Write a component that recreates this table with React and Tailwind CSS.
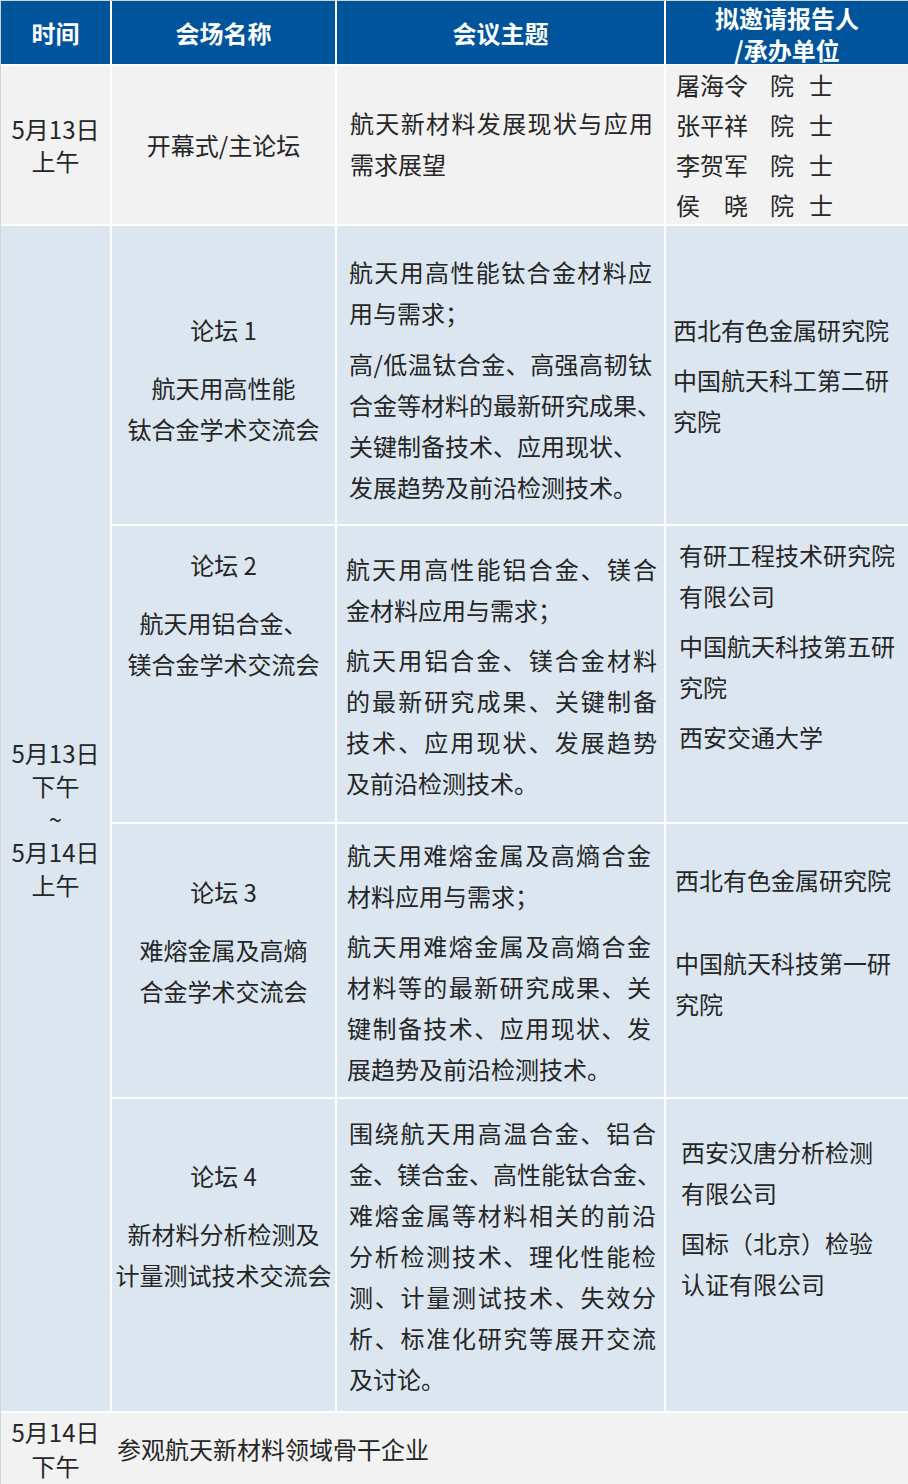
const cn = "font-['Noto_Sans_CJK_SC','Noto_Sans',sans-serif]";

function Lines({ lines, className = "" }) {
  // each entry: [text, justify]
  return (
    <div className={className}>
      {lines.map(([t, j], i) => (
        <div
          key={i}
          className={j ? "text-justify [text-align-last:justify]" : "whitespace-nowrap"}
        >
          {t}
        </div>
      ))}
    </div>
  );
}

function Forum({ num, title, pt }) {
  return (
    <div className={`bg-[#dce6f1] flex flex-col items-center text-center leading-[41px] ${pt}`}>
      <div>论坛 {num}</div>
      <div className="mt-[17px]">
        {title.map((t) => (
          <div key={t} className="whitespace-nowrap">{t}</div>
        ))}
      </div>
    </div>
  );
}

const speakers = [
  ["屠海令"],
  ["张平祥"],
  ["李贺军"],
  ["侯", "晓"],
];

export default function App() {
  return (
    <div
      className={`${cn} w-[908px] h-[1484px] bg-white border-l border-t border-[#d4d4d4] grid grid-cols-[109px_223px_327px_1fr] grid-rows-[63px_158px_298px_296px_273px_312px_71px] gap-[2px] text-[24px] text-[#262626]`}
    >
      {/* header */}
      <div className="bg-[#00549b] text-white font-bold flex items-center justify-center">时间</div>
      <div className="bg-[#00549b] text-white font-bold flex items-center justify-center">会场名称</div>
      <div className="bg-[#00549b] text-white font-bold flex items-center justify-center">会议主题</div>
      <div className="bg-[#00549b] text-white font-bold flex flex-col items-center justify-center leading-[32px] pt-[2px]">
        <div>拟邀请报告人</div>
        <div>/承办单位</div>
      </div>

      {/* 开幕式 */}
      <div className="bg-[#f2f2f2] flex flex-col items-center justify-center leading-[32px]">
        <div>5月13日</div>
        <div>上午</div>
      </div>
      <div className="bg-[#f2f2f2] flex items-center justify-center">开幕式/主论坛</div>
      <div className="bg-[#f2f2f2] flex items-center pl-[13px] pb-[4px] leading-[41px]">
        <Lines className="w-[303px]" lines={[["航天新材料发展现状与应用", true], ["需求展望"]]} />
      </div>
      <div className="bg-[#f2f2f2] pl-[10px] leading-[40px] -mt-px">
        {speakers.map((s, i) => (
          <div key={i} className="flex whitespace-nowrap">
            {s.length === 1 ? (
              <span className="w-[94px]">{s[0]}</span>
            ) : (
              <span className="w-[94px] flex">
                <span className="w-[48px]">{s[0]}</span>
                {s[1]}
              </span>
            )}
            <span className="w-[39px]">院</span>
            <span>士</span>
          </div>
        ))}
      </div>

      {/* merged time cell */}
      <div className="bg-[#dce6f1] row-span-4 flex flex-col items-center justify-center leading-[33px]">
        <div>5月13日</div>
        <div>下午</div>
        <div>~</div>
        <div>5月14日</div>
        <div>上午</div>
      </div>

      {/* 论坛 1 */}
      <Forum num="1" title={["航天用高性能", "钛合金学术交流会"]} pt="pt-[83px]" />
      <div className="bg-[#dce6f1] pl-[12px] pt-[25px] leading-[41px]">
        <Lines className="w-[303px]" lines={[["航天用高性能钛合金材料应", true], ["用与需求；"]]} />
        <Lines
          className="w-[303px] mt-[10px]"
          lines={[
            ["高/低温钛合金、高强高韧钛", true],
            ["合金等材料的最新研究成果、"],
            ["关键制备技术、应用现状、"],
            ["发展趋势及前沿检测技术。"],
          ]}
        />
      </div>
      <div className="bg-[#dce6f1] pl-[7px] pt-[83px] leading-[41px]">
        <Lines lines={[["西北有色金属研究院"]]} />
        <Lines className="mt-[9px]" lines={[["中国航天科工第二研"], ["究院"]]} />
      </div>

      {/* 论坛 2 */}
      <Forum num="2" title={["航天用铝合金、", "镁合金学术交流会"]} pt="pt-[18px]" />
      <div className="bg-[#dce6f1] pl-[9px] pt-[22px] leading-[41px]">
        <Lines className="w-[311px]" lines={[["航天用高性能铝合金、镁合", true], ["金材料应用与需求；"]]} />
        <Lines
          className="w-[311px] mt-[9px]"
          lines={[
            ["航天用铝合金、镁合金材料", true],
            ["的最新研究成果、关键制备", true],
            ["技术、应用现状、发展趋势", true],
            ["及前沿检测技术。"],
          ]}
        />
      </div>
      <div className="bg-[#dce6f1] pl-[13px] pt-[8px] leading-[41px]">
        <Lines lines={[["有研工程技术研究院"], ["有限公司"]]} />
        <Lines className="mt-[9px]" lines={[["中国航天科技第五研"], ["究院"]]} />
        <Lines className="mt-[9px]" lines={[["西安交通大学"]]} />
      </div>

      {/* 论坛 3 */}
      <Forum num="3" title={["难熔金属及高熵", "合金学术交流会"]} pt="pt-[47px]" />
      <div className="bg-[#dce6f1] pl-[10px] pt-[10px] leading-[41px]">
        <Lines className="w-[304px]" lines={[["航天用难熔金属及高熵合金", true], ["材料应用与需求；"]]} />
        <Lines
          className="w-[304px] mt-[9px]"
          lines={[
            ["航天用难熔金属及高熵合金", true],
            ["材料等的最新研究成果、关", true],
            ["键制备技术、应用现状、发", true],
            ["展趋势及前沿检测技术。"],
          ]}
        />
      </div>
      <div className="bg-[#dce6f1] pl-[9px] pt-[35px] leading-[41px]">
        <Lines lines={[["西北有色金属研究院"]]} />
        <Lines className="mt-[42px]" lines={[["中国航天科技第一研"], ["究院"]]} />
      </div>

      {/* 论坛 4 */}
      <Forum num="4" title={["新材料分析检测及", "计量测试技术交流会"]} pt="pt-[56px]" />
      <div className="bg-[#dce6f1] pl-[12px] pt-[13px] leading-[41px]">
        <Lines
          className="w-[307px]"
          lines={[
            ["围绕航天用高温合金、铝合", true],
            ["金、镁合金、高性能钛合金、"],
            ["难熔金属等材料相关的前沿", true],
            ["分析检测技术、理化性能检", true],
            ["测、计量测试技术、失效分", true],
            ["析、标准化研究等展开交流", true],
            ["及讨论。"],
          ]}
        />
      </div>
      <div className="bg-[#dce6f1] pl-[15px] pt-[32px] leading-[41px]">
        <Lines lines={[["西安汉唐分析检测"], ["有限公司"]]} />
        <Lines className="mt-[9px]" lines={[["国标（北京）检验"], ["认证有限公司"]]} />
      </div>

      {/* 参观 */}
      <div className="bg-[#f2f2f2] col-span-4 flex items-center">
        <div className="w-[109px] flex flex-col items-center leading-[34px]">
          <div>5月14日</div>
          <div>下午</div>
        </div>
        <div className="pl-[7px]">参观航天新材料领域骨干企业</div>
      </div>
    </div>
  );
}
